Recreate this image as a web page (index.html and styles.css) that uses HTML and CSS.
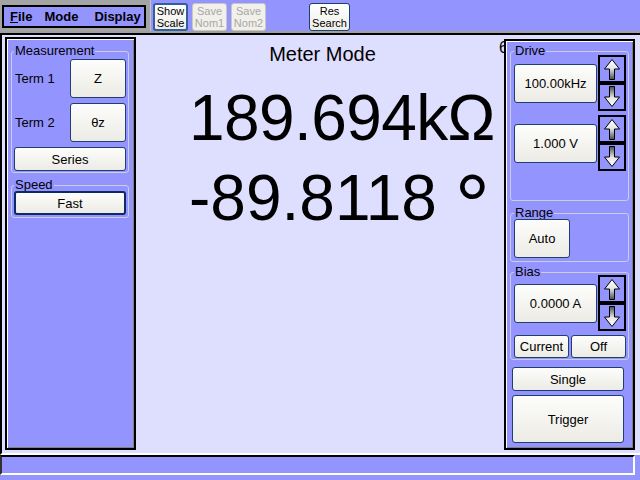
FILE: index.html
```html
<!DOCTYPE html>
<html>
<head>
<meta charset="utf-8">
<title>Meter Mode</title>
<link rel="stylesheet" href="styles.css">
</head>
<body>
<div class="topbar">
  <div class="menuzone">
    <div class="menu">
      <span class="mi mi-file"><u>F</u>ile</span>
      <span class="mi mi-mode">Mode</span>
      <span class="mi mi-display">Display</span>
    </div>
  </div>
  <div class="toolzone">
    <button class="tb tb-active">Show<br>Scale</button>
    <button class="tb tb-disabled">Save<br>Nom1</button>
    <button class="tb tb-disabled">Save<br>Nom2</button>
    <button class="tb tb-res">Res<br>Search</button>
  </div>
</div>

<div class="main">
  <div class="panel panel-left">
    <fieldset class="group g-meas">
      <legend>Measurement</legend>
      <div class="termrow"><span class="lbl">Term 1</span><button class="btn btn-term">Z</button></div>
      <div class="termrow termrow-2"><span class="lbl">Term 2</span><button class="btn btn-term">θz</button></div>
      <button class="btn btn-wide btn-series">Series</button>
    </fieldset>
    <fieldset class="group g-speed">
      <legend>Speed</legend>
      <button class="btn btn-wide btn-focus">Fast</button>
    </fieldset>
  </div>

  <div class="center">
    <div class="title">Meter Mode</div>
    <div class="corner">6</div>
    <div class="readings">
      <div class="reading reading-1">189.694kΩ</div>
      <div class="reading">-89.8118 <span class="deg">°</span></div>
    </div>
  </div>

  <div class="panel panel-right">
    <fieldset class="group g-drive">
      <legend>Drive</legend>
      <div class="spinrow spinrow-1">
        <button class="btn btn-value">100.00kHz</button>
        <div class="arrows">
          <button class="arrow"><svg viewBox="0 0 24 24" width="24" height="24"><defs><linearGradient id="ag" x1="0" y1="0" x2="0" y2="1"><stop offset="0" stop-color="#ffffff"/><stop offset="0.45" stop-color="#e6e6e6"/><stop offset="1" stop-color="#4a4a4a"/></linearGradient></defs><path d="M12 2.5 L19.5 12 L14.5 12 L14.5 22.5 L9.5 22.5 L9.5 12 L4.5 12 Z" fill="url(#ag)" stroke="#000" stroke-width="1"/></svg></button>
          <button class="arrow arrow-down"><svg viewBox="0 0 24 24" width="24" height="24"><path d="M12 2.5 L19.5 12 L14.5 12 L14.5 22.5 L9.5 22.5 L9.5 12 L4.5 12 Z" fill="url(#ag)" stroke="#000" stroke-width="1"/></svg></button>
        </div>
      </div>
      <div class="spinrow spinrow-2">
        <button class="btn btn-value">1.000 V</button>
        <div class="arrows">
          <button class="arrow"><svg viewBox="0 0 24 24" width="24" height="24"><path d="M12 2.5 L19.5 12 L14.5 12 L14.5 22.5 L9.5 22.5 L9.5 12 L4.5 12 Z" fill="url(#ag)" stroke="#000" stroke-width="1"/></svg></button>
          <button class="arrow arrow-down"><svg viewBox="0 0 24 24" width="24" height="24"><path d="M12 2.5 L19.5 12 L14.5 12 L14.5 22.5 L9.5 22.5 L9.5 12 L4.5 12 Z" fill="url(#ag)" stroke="#000" stroke-width="1"/></svg></button>
        </div>
      </div>
    </fieldset>

    <fieldset class="group g-range">
      <legend>Range</legend>
      <button class="btn btn-auto">Auto</button>
    </fieldset>

    <fieldset class="group g-bias">
      <legend>Bias</legend>
      <div class="spinrow spinrow-bias">
        <button class="btn btn-value">0.0000 A</button>
        <div class="arrows">
          <button class="arrow"><svg viewBox="0 0 24 24" width="24" height="24"><path d="M12 2.5 L19.5 12 L14.5 12 L14.5 22.5 L9.5 22.5 L9.5 12 L4.5 12 Z" fill="url(#ag)" stroke="#000" stroke-width="1"/></svg></button>
          <button class="arrow arrow-down"><svg viewBox="0 0 24 24" width="24" height="24"><path d="M12 2.5 L19.5 12 L14.5 12 L14.5 22.5 L9.5 22.5 L9.5 12 L4.5 12 Z" fill="url(#ag)" stroke="#000" stroke-width="1"/></svg></button>
        </div>
      </div>
      <div class="pairrow">
        <button class="btn btn-half">Current</button>
        <button class="btn btn-half">Off</button>
      </div>
    </fieldset>

    <button class="btn btn-single">Single</button>
    <button class="btn btn-trigger">Trigger</button>
  </div>
</div>

<div class="statusrow"><div class="status"></div></div>
</body>
</html>
```

FILE: styles.css
```css
* { box-sizing: border-box; }
html, body { margin: 0; padding: 0; }
body {
  width: 640px;
  height: 480px;
  overflow: hidden;
  background: #9494ff;
  font-family: "Liberation Sans", Arial, sans-serif;
  font-size: 13px;
  color: #000;
}

/* ---------- top bar ---------- */
.topbar {
  display: flex;
  height: 33px;
  border-bottom: 2px solid #a0a0a0;
}
.menuzone {
  width: 151px;
  background: #a4a4a4;
  border-right: 1px solid #c4c4c4;
  padding: 5px 0 0 2px;
}
.menu {
  width: 144px;
  height: 23px;
  border: 2px solid #000;
  background: #9494ff;
  display: flex;
  align-items: center;
  padding-left: 6px;
  font-weight: bold;
  font-size: 13px;
}
.mi-mode { margin-left: 12px; }
.mi-display { margin-left: 16px; }

.toolzone {
  flex: 1;
  display: flex;
  align-items: flex-start;
  padding: 3px 0 0 2px;
}
.tb {
  width: 35px;
  height: 28px;
  margin-right: 4px;
  padding: 0;
  font-family: "Liberation Sans", Arial, sans-serif;
  font-size: 11px;
  line-height: 12px;
  border-radius: 3px;
  border: 1px solid #1f3f6f;
  background: linear-gradient(#ffffff, #eeede8);
  color: #000;
}
.tb-active { border: 2px solid #2f5f9f; }
.tb-disabled {
  border-color: #c8c8c0;
  background: #f1f0ea;
  color: #a8a8a4;
}
.tb-res { width: 41px; margin-left: 39px; }

/* ---------- main area ---------- */
.main {
  display: flex;
  height: 422px;
  background: #dedeff;
  border-top: 2px solid #000;
  border-left: 2px solid #000;
  border-bottom: 2px solid #fff;
}
.panel {
  width: 131px;
  background: #9494ff;
  border: 2px solid #000;
  box-shadow: inset 1px 1px 0 #fff, inset -1px -1px 0 #808080;
  padding: 1px;
  position: relative;
  z-index: 1;
  display: flex;
  flex-direction: column;
}
.panel-left { margin: 2px 0 3px 3px; }
.panel-right { margin: 4px 5px 3px 0; }

.group {
  margin: 0;
  min-width: 0;
  border: 1px solid #cdcde2;
  border-radius: 3px;
  padding: 0 2px 1px 2px;
  display: flex;
  flex-direction: column;
}
.group legend {
  padding: 0 1px;
  font-size: 13px;
  line-height: 14px;
}

/* buttons */
.btn {
  font-family: "Liberation Sans", Arial, sans-serif;
  font-size: 13px;
  color: #000;
  padding: 0;
  border: 1px solid #1f3f6f;
  border-radius: 3px;
  background: linear-gradient(#fdfdfb, #ecebe5);
}
.btn-focus { border: 2px solid #0c2a66; }

/* left panel */
.g-meas { margin: 4px 4px 0 3px; }
.termrow {
  display: flex;
  align-items: center;
  height: 39px;
  margin-top: 1px;
}
.termrow-2 { margin-top: 5px; }
.lbl { width: 56px; padding-left: 1px; }
.btn-term { width: 56px; height: 39px; }
.btn-wide { width: 112px; height: 24px; }
.btn-series { margin-top: 5px; }
.g-speed { margin: 5px 4px 0 3px; padding-bottom: 2px; }
.g-speed .btn-wide { margin-top: -1px; }

/* center */
.center {
  flex: 1;
  position: relative;
}
.title {
  margin-top: 7px;
  padding-left: 5px;
  text-align: center;
  font-size: 20px;
  line-height: 24px;
}
.corner {
  position: absolute;
  top: 5px;
  right: -4px;
  font-size: 16px;
  line-height: 16px;
}
.readings {
  margin-top: 12px;
  padding-left: 53px;
}
.reading {
  font-size: 64px;
  line-height: 80px;
  white-space: nowrap;
}
.reading-1 { letter-spacing: -0.6px; }
.deg {
  font-size: 88px;
  line-height: 0;
  vertical-align: -16px;
}

/* right panel */
.g-drive { margin: 2px 3px 0 3px; padding: 0 2px 29px 3px; }
.spinrow {
  display: flex;
  align-items: center;
}
.spinrow-1 { margin-top: -3px; }
.spinrow-2 { margin-top: 4px; }
.btn-value { width: 83px; height: 39px; margin-right: 1px; }
.arrows {
  display: flex;
  flex-direction: column;
}
.arrow {
  width: 28px;
  height: 28px;
  padding: 0;
  border: 2px solid #000;
  background: #9494ff;
  display: flex;
  align-items: center;
  justify-content: center;
}
.arrow svg { display: block; }
.arrow-down svg { transform: rotate(180deg); }

.g-range { margin: 5px 3px 0 3px; padding: 0 2px 3px 3px; }
.btn-auto { width: 56px; height: 39px; margin-top: -1px; }

.g-bias { margin: 3px 3px 0 3px; padding: 0 2px 1px 3px; }
.spinrow-bias { margin-top: -4px; }
.pairrow {
  display: flex;
  gap: 2px;
  margin-top: 4px;
}
.btn-half { width: 55px; height: 23px; }

.btn-single {
  width: 112px;
  height: 24px;
  margin: 7px 0 0 5px;
}
.btn-trigger {
  width: 112px;
  height: 48px;
  margin: 4px 0 0 5px;
}

/* ---------- status ---------- */
.statusrow { height: 25px; }
.status {
  width: 635px;
  height: 20px;
  border-top: 2px solid #000;
  border-left: 2px solid #303030;
  border-right: 2px solid #fff;
  border-bottom: 2px solid #fff;
  background: #9494ff;
}
```
